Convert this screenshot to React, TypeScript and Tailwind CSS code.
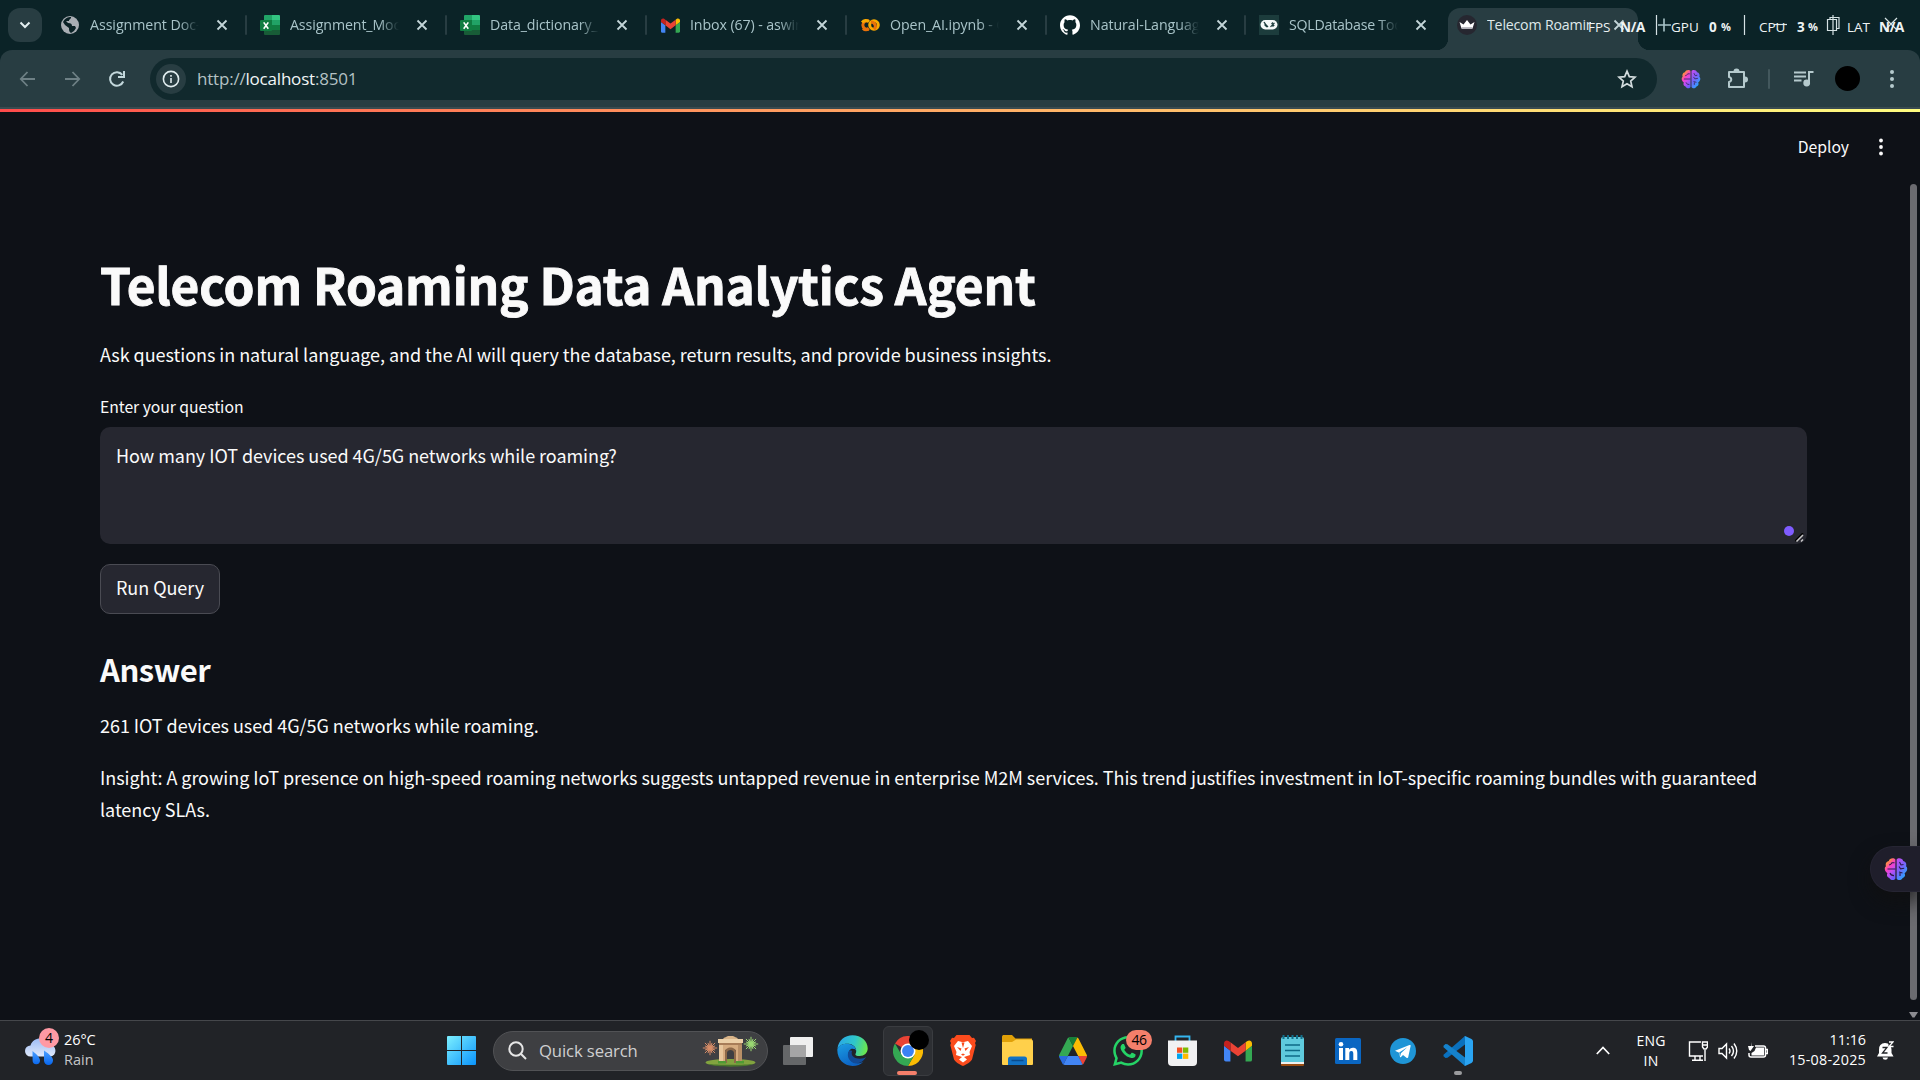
import React, { useId } from "react";
import type { ReactNode } from "react";
import { SiGithub, SiWhatsapp } from "react-icons/si";

const SYS = "font-['Open_Sans','Noto_Sans',sans-serif]";
const APP = "font-['Noto_Sans_CJK_SC',sans-serif]";

function Globe() {
  return (
    <svg width="20" height="20" viewBox="0 0 20 20">
      <circle cx="10" cy="10" r="9" fill="#a9aeb4" />
      <path d="M3 7c2-4 5-5 8-5 .5 2-2 2-2 4H6l2 2c3 0 4 1 4 3h3l1 2-2 3-3 2c-2-1-2-3-2-5L5 10z" fill="#0b2226" />
      <path d="M9 6l3-2 3 2-2 2z" fill="#a9aeb4" />
    </svg>
  );
}

function Excel() {
  return (
    <svg width="20" height="20" viewBox="0 0 20 20">
      <path d="M4 1a1 1 0 0 1 1-1h7v6H4z" fill="#21a366" />
      <path d="M12 0h7a1 1 0 0 1 1 1v4h-8z" fill="#33c481" />
      <path d="M4 5h8v5H4z" fill="#107c41" />
      <path d="M12 5h8v5h-8z" fill="#21a366" />
      <path d="M4 10h8v5H4z" fill="#185c37" />
      <path d="M12 10h8v5h-8z" fill="#107c41" />
      <path d="M4 15h16v4a1 1 0 0 1-1 1H5a1 1 0 0 1-1-1z" fill="#185c37" />
      <rect x="0" y="5" width="12" height="11" rx="1" fill="#107c41" />
      <path d="M3.700 7.400l4.600 6.400M8.300 7.400l-4.600 6.400" stroke="#fff" strokeWidth="1.600" />
    </svg>
  );
}

function Gmail({ size }: { size: number }) {
  return (
    <svg width={size} height={size} viewBox="0 0 24 24">
      <path d="M0 5.500v14A1.600 1.600 0 0 0 1.600 21H5.500V11.700L0 7.600z" fill="#4285f4" />
      <path d="M18.500 11.700V21h3.900a1.600 1.600 0 0 0 1.600-1.600V7.600z" fill="#34a853" />
      <path d="M18.500 4.600v7.100L24 7.600V5.500c0-2-2.300-3.200-3.900-2z" fill="#fbbc04" />
      <path d="M5.500 4.600L12 9.500l6.500-4.900v7.100L12 16.600l-6.500-4.900z" fill="#ea4335" />
      <path d="M0 5.500v2.100l5.500 4.100V4.600L3.900 3.500C2.300 2.300 0 3.500 0 5.500z" fill="#c5221f" />
    </svg>
  );
}

function Colab() {
  return (
    <svg width="20" height="20" viewBox="0 0 20 20" fill="none" strokeWidth="3">
      <path d="M8.700 6A4.300 4.300 0 1 0 8.700 14" stroke="#e8710a" />
      <circle cx="14" cy="10" r="4.300" stroke="#f9ab00" />
      <path d="M3 13.300A4.400 4.400 0 0 0 8.800 13.500" stroke="#e8710a" />
      <path d="M2.200 7.500A4.400 4.400 0 0 1 9 6.700" stroke="#f9ab00" />
      <path d="M11 6.900A4.300 4.300 0 0 1 14 14.300" stroke="#e8710a" />
    </svg>
  );
}

function Langchain() {
  return (
    <svg width="20" height="20" viewBox="0 0 20 20">
      <rect width="20" height="20" fill="#1c3c3c" />
      <rect x="1.500" y="5" width="17" height="9.500" rx="4.700" fill="#f4f8f8" />
      <path d="M5 7c1 2 2 3 4 5M5.500 9.500L8 12" stroke="#1c3c3c" strokeWidth="1.300" fill="none" />
      <path d="M11.500 11.800l4-4M12.500 9l1.500-1.500M13.500 11.500l1.800-1.500" stroke="#1c3c3c" strokeWidth="1.200" fill="none" />
    </svg>
  );
}

function Crown() {
  return (
    <svg width="20" height="20" viewBox="0 0 20 20">
      <circle cx="10" cy="10" r="10" fill="#262730" />
      <path d="M2.500 7l4 2.500L10 5l3.500 4.500 4-2.500-2 6.500h-11z" fill="#fff" />
      <path d="M4.300 12l11.400 0-.5 1.700H4.800z" fill="#bdbdc4" />
    </svg>
  );
}

function Brain({ size, line }: { size: number; line: string }) {
  const id = useId();
  return (
    <svg width={size} height={size} viewBox="0 0 24 24">
      <defs>
        <linearGradient id={id + "l"} x1="0.150" y1="0" x2="0.700" y2="1">
          <stop offset="0" stopColor="#ffb01f" />
          <stop offset="0.200" stopColor="#ff8a4a" />
          <stop offset="0.420" stopColor="#fb3fc0" />
          <stop offset="0.650" stopColor="#c84cf0" />
          <stop offset="1" stopColor="#6a5cff" />
        </linearGradient>
        <linearGradient id={id + "r"} x1="0" y1="0" x2="0.600" y2="1">
          <stop offset="0" stopColor="#d04af0" />
          <stop offset="0.500" stopColor="#7a62fa" />
          <stop offset="1" stopColor="#25a8ff" />
        </linearGradient>
      </defs>
      <path d="M11.400 2.500v19c-1.200 2.200-5 2-6-.6-2.300-.2-3-2.600-2-4.600C.8 14.700-.2 10.800 2 9.300 1 6.700 2.500 4.300 4.800 4 5.300 1 10 .2 11.400 2.500z" fill={`url(#${id}l)`} />
      <path d="M12.600 2.500v19c1.200 2.200 5 2 6-.6 2.300-.2 3-2.600 2-4.600 2.600-1.600 3.600-5.500 1.400-7 1-2.600-.5-5-2.800-5.300C18.700 1 14 .2 12.600 2.500z" fill={`url(#${id}r)`} />
      <path d="M3.500 12h7.900M5 8c1.500 0 2.200-.8 3-2.200h2.500M6 16c.5 1.800 1.500 2.500 4 2.600M15.500 5l1.500 3 2.500-.5M15 9.500l1.600 2.300 3.600-.5M15 15l3.500 1M16 19v-3" stroke={line} strokeWidth="1.100" fill="none" />
    </svg>
  );
}

function Close() {
  return (
    <svg width="12" height="12" viewBox="0 0 12 12" className="shrink-0">
      <path d="M1.500 1.500l9 9M10.500 1.500l-9 9" stroke="#c3d5d8" strokeWidth="1.800" />
    </svg>
  );
}

const tabs: { icon: ReactNode; title: string; track: string; w: string }[] = [
  { icon: <Globe />, title: "Assignment Doc-", track: "tracking-[-0.05px]", w: "w-[200px]" },
  { icon: <Excel />, title: "Assignment_Moc", track: "tracking-[-0.1px]", w: "w-[200px]" },
  { icon: <Excel />, title: "Data_dictionary_R", track: "tracking-[-0.1px]", w: "w-[200px]" },
  { icon: <Gmail size={19} />, title: "Inbox (67) - aswin", track: "tracking-[-0.1px]", w: "w-[200px]" },
  { icon: <Colab />, title: "Open_AI.ipynb - C", track: "tracking-[-0.1px]", w: "w-[200px]" },
  { icon: <SiGithub size={20} color="#fff" />, title: "Natural-Language", track: "tracking-[-0.05px]", w: "w-[199px]" },
  { icon: <Langchain />, title: "SQLDatabase Tool", track: "tracking-[-0.25px]", w: "w-[199px]" },
];

const fade = "[mask-image:linear-gradient(to_right,#000_82%,transparent)]";

function TabStrip() {
  return (
    <div className="relative flex h-[50px] items-center bg-[#0b2327] text-[14.200px] text-[#a9c4c9]">
      <div className="ml-2 mr-1 flex h-[34px] w-[34px] items-center justify-center rounded-xl bg-[#283d42]">
        <svg width="12" height="8" viewBox="0 0 12 8" fill="none">
          <path d="M1.500 1.500L6 6l4.500-4.500" stroke="#e3eef0" strokeWidth="2" />
        </svg>
      </div>
      {tabs.map((t, i) => (
        <div key={i} className={`relative flex h-full shrink-0 items-center pl-[14px] ${t.w}`}>
          <span className="flex w-5 justify-center">{t.icon}</span>
          <span className={`ml-[10px] w-[109px] overflow-hidden whitespace-nowrap leading-[20px] ${t.track} ${fade}`}>{t.title}</span>
          <span className="ml-[17px]"><Close /></span>
          {i < 6 && <span className="absolute -right-[1px] top-[15px] h-5 w-[2px] rounded bg-[#283d42]" />}
        </div>
      ))}
      <div className="relative ml-[4px] mt-2 flex h-[42px] w-[190px] items-center self-start rounded-t-xl bg-[#283d42] pl-[9px] text-[#dfe8ea]">
        <span className="absolute -left-3 bottom-0 h-3 w-3 bg-[radial-gradient(circle_at_0_0,transparent_12px,#283d42_12.500px)]" />
        <span className="absolute -right-3 bottom-0 h-3 w-3 bg-[radial-gradient(circle_at_100%_0,transparent_12px,#283d42_12.500px)]" />
        <span className="mb-2 flex items-center">
          <Crown />
          <span className="ml-[10px] w-[104px] overflow-hidden whitespace-nowrap leading-[20px] tracking-[-0.2px]">Telecom Roaming</span>
        </span>
        <span className="absolute left-[165px] top-[11px]"><Close /></span>
      </div>
      <svg className="absolute left-[1640px] top-0" width="280" height="50" viewBox="0 0 280 50" fill="none" stroke="#d6e2e4">
        <path d="M16.500 15v20M104.500 15v20" strokeWidth="1.200" />
        <path d="M18 25h13M24 18.500v13" stroke="#a9c4c9" strokeWidth="1.600" />
        <path d="M134 24.500h13" strokeWidth="1.200" />
        <path d="M187.500 19.500h9v11h-9zM190 19v-1.500h9v11h-2M193 15v20" strokeWidth="1.200" />
        <path d="M245 18l12 12M257 18l-12 12" strokeWidth="1.200" />
      </svg>
      <div className="absolute left-[1588px] top-[17px] flex items-center whitespace-nowrap font-['Open_Sans',sans-serif] text-[13.500px] leading-[20px] text-[#eef3f4]">
        <span className="w-[32px]">FPS</span>
        <b className="w-[51px] tracking-[-0.3px]">N/A</b>
        <span className="w-[38px]">GPU</span>
        <b className="w-[12px]">0</b>
        <b className="w-[38px] text-[11px]">%</b>
        <span className="w-[38px]">CPU</span>
        <b className="w-[11px]">3</b>
        <b className="w-[39px] text-[11px]">%</b>
        <span className="w-[32px]">LAT</span>
        <b className="tracking-[-0.3px]">N/A</b>
      </div>
    </div>
  );
}

function Toolbar() {
  return (
    <div className="bg-[#0b2327]">
      <div className="flex h-[59px] items-center rounded-t-[12px] border-b-2 border-[#3a4b50] bg-[#283d42]">
        <svg className="ml-[19px]" width="17" height="16" viewBox="0 0 17 16" fill="none" stroke="#6e8085" strokeWidth="1.800">
          <path d="M16 8H2M8.500 1L1.800 8l6.700 7" />
        </svg>
        <svg className="ml-[28px]" width="17" height="16" viewBox="0 0 17 16" fill="none" stroke="#6e8085" strokeWidth="1.800">
          <path d="M1 8h14M8.500 1l6.700 7-6.700 7" />
        </svg>
        <svg className="ml-[27px]" width="18" height="18" viewBox="0 0 18 18" fill="none" stroke="#c3d8dc" strokeWidth="2">
          <path d="M15.200 11.500A6.800 6.800 0 1 1 14.300 4.800" />
          <path d="M16 1v6h-6" />
        </svg>
        <div className="ml-[24px] flex h-[42px] w-[1507px] items-center rounded-full bg-[#11292d] pl-[6px]">
          <span className="flex h-[30px] w-[30px] items-center justify-center rounded-full bg-[#283d42]">
            <svg width="18" height="18" viewBox="0 0 18 18" fill="none" stroke="#e0ecee" strokeWidth="1.600">
              <circle cx="9" cy="9" r="7.600" />
              <path d="M9 8v5M9 5v1.700" />
            </svg>
          </span>
          <span className="ml-[11px] mt-[1px] text-[17px] leading-[22px] tracking-[-0.200px] text-[#b4c1c4]">
            http://<span className="text-[#f1f6f7]">localhost</span>:8501
          </span>
          <svg className="ml-auto mr-[20px]" width="20" height="20" viewBox="0 0 20 20" fill="none" stroke="#d3dcde" strokeWidth="1.700">
            <path d="M10 2.200l2.300 5.400 5.800.5-4.400 3.900 1.300 5.700-5-3-5 3 1.300-5.700-4.400-3.900 5.800-.5z" />
          </svg>
        </div>
        <span className="ml-[24px] flex w-5"><Brain size={20} line="#3b2b6a" /></span>
        <svg className="ml-[26px]" width="22" height="22" viewBox="0 0 22 22" fill="none" stroke="#b5cacd" strokeWidth="2">
          <path d="M2 4h15v15H2v-5c3-.5 3-4.500 0-5z" strokeLinejoin="round" />
          <path d="M7.500 3.500a2 2 0 0 1 4 0zM18 9.500a2 2 0 0 1 0 4z" fill="#b5cacd" />
        </svg>
        <span className="ml-[19px] h-5 w-[2px] rounded bg-[#43585d]" />
        <svg className="ml-[24px]" width="20" height="18" viewBox="0 0 20 18" fill="none" stroke="#b5cacd" strokeWidth="2">
          <path d="M0 2.500h12M0 6.500h12M0 10.500h7.500M15 13V2h4.500" />
          <circle cx="12.700" cy="13" r="2.400" fill="#b5cacd" />
        </svg>
        <span className="ml-[21px] h-[25px] w-[25px] rounded-full bg-black" />
        <svg className="ml-[30px]" width="4" height="20" viewBox="0 0 4 20" fill="#b5cacd">
          <circle cx="2" cy="3" r="2" /><circle cx="2" cy="10" r="2" /><circle cx="2" cy="17" r="2" />
        </svg>
      </div>
    </div>
  );
}

function Main() {
  return (
    <div className={`relative flex flex-1 flex-col bg-[#0e1117] text-[18px] tracking-[-0.047px] text-[#fafafa] ${APP}`}>
      <div className="h-[3px] bg-gradient-to-r from-[#ff4b4b] to-[#fffd80]" />
      <div className="flex h-[70px] items-center justify-end">
        <span className="text-[15.750px]">Deploy</span>
        <svg className="ml-[30px] mr-[37px]" width="4" height="18" viewBox="0 0 4 18" fill="#fafafa">
          <circle cx="2" cy="2.500" r="1.900" /><circle cx="2" cy="9" r="1.900" /><circle cx="2" cy="15.500" r="1.900" />
        </svg>
      </div>
      <div className="flex w-[1807px] flex-col items-start pl-[100px] pt-[69px]">
        <h1 className="text-[49.500px] font-bold leading-[66px] tracking-[-0.190px] [-webkit-text-stroke:0.900px_#fafafa]">Telecom Roaming Data Analytics Agent</h1>
        <p className="mt-[21px] leading-[32px]">Ask questions in natural language, and the AI will query the database, return results, and provide business insights.</p>
        <label className="mt-[24px] text-[15.750px] leading-[26px]">Enter your question</label>
        <div className="relative mt-[7px] h-[117px] w-full rounded-[10px] bg-[#262730] px-4 py-[12px] leading-[32px]">
          How many IOT devices used 4G/5G networks while roaming?
          <span className="absolute bottom-[8px] right-[13px] h-[10px] w-[10px] rounded-full bg-[#7f5cff]" />
          <svg className="absolute bottom-[1px] right-[2px]" width="10" height="10" viewBox="0 0 10 10" stroke="#c9c9c9" strokeWidth="1.500">
            <path d="M0 8l8-8" stroke="#000" />
            <path d="M1.500 8.500l6.500-6.500M6 8.500l2-2" />
          </svg>
        </div>
        <button className="mt-[20px] h-[50px] w-[120px] rounded-[10px] border border-[#4a4b53] bg-[#262730] pb-[3px]">Run Query</button>
        <h2 className="mt-[34px] text-[31px] font-semibold leading-[42px] tracking-[-0.450px]">Answer</h2>
        <p className="mt-[19px] leading-[32px]">261 IOT devices used 4G/5G networks while roaming.</p>
        <p className="mt-[20px] leading-[32px]">Insight: A growing IoT presence on high-speed roaming networks suggests untapped revenue in enterprise M2M services. This trend justifies investment in IoT-specific roaming bundles with guaranteed latency SLAs.</p>
      </div>
      <div className="absolute right-[3px] top-[75px] h-[816px] w-[7px] rounded-full bg-[#6b6b70]" />
      <svg className="absolute bottom-[2px] right-[2px]" width="9" height="6" viewBox="0 0 9 6"><path d="M0 0h9L5.500 5.500h-2z" fill="#8b8b90" /></svg>
      <div className="absolute right-0 top-[737px] flex h-[46px] w-[50px] items-center rounded-l-full border border-r-0 border-[#262533] bg-[#1f1e2b] pl-[13px] shadow-[0_10px_20px_rgba(16,16,16,0.8)]">
        <Brain size={24} line="#2b1a4c" />
      </div>
    </div>
  );
}

function Gate() {
  const rays = Array.from({ length: 16 }, (_, i) => (i * Math.PI) / 8);
  const burst = (cx: number, cy: number, color: string) => (
    <g stroke={color} strokeWidth="1">
      {rays.map((a, i) => (
        <path key={i} d={`M${cx} ${cy}L${cx + Math.cos(a) * (i % 2 ? 5.5 : 7.2)} ${cy + Math.sin(a) * (i % 2 ? 5.5 : 7.2)}`} />
      ))}
      <circle cx={cx} cy={cy} r="3.500" fill={color} fillOpacity="0.600" stroke="none" />
    </g>
  );
  return (
    <svg width="58" height="34" viewBox="0 0 58 34">
      {burst(8, 14, "#d98d68")}
      {burst(49, 10, "#9bd873")}
      <ellipse cx="28.500" cy="28.500" rx="25" ry="3.600" fill="#82a33f" />
      <path d="M5 30c10 3.500 38 3.500 47 0-8 1-38 1-47 0z" fill="#48752c" />
      <path d="M17 10h23v19h-6V17c0-3-11-3-11 0v12h-6z" fill="#d6ac80" />
      <path d="M17 10h4v19h-4z" fill="#e8c79d" />
      <path d="M36 10h4v19h-4z" fill="#b88f67" />
      <path d="M23 29V18c0-6 11-6 11 0v11h-2V19c0-4-7-4-7 0v10z" fill="#8d6949" />
      <path d="M16 5h25v4H16z" fill="#ecd0a8" />
      <path d="M17 9h23v2H17z" fill="#a87d58" />
      <path d="M21 5c1-2 4-2 5-3h5c1 1 4 1 5 3z" fill="#d9b489" />
      <path d="M16 27h8v2.500h-8zM34 27h8v2.500h-8z" fill="#4f9a34" />
    </svg>
  );
}

function Edge() {
  return (
    <svg width="31" height="31" viewBox="0 0 32 32">
      <defs>
        <linearGradient id="eg" x1="0" y1="0.300" x2="1" y2="0.500"><stop offset="0" stopColor="#2aa7e8" /><stop offset="0.550" stopColor="#2fc7c9" /><stop offset="1" stopColor="#6be84d" /></linearGradient>
        <linearGradient id="eb" x1="0" y1="0" x2="0.500" y2="1"><stop offset="0" stopColor="#1b9de2" /><stop offset="1" stopColor="#0c62c4" /></linearGradient>
      </defs>
      <path d="M.5 14C1.500 5.500 8 .3 16 .3c9 0 15.700 6 15.700 13.500 0 5-3.700 8-8.200 8-3.500 0-5-1.300-4.600-2.300C21 17 20 10 12 9 6 8.500 2 11 .5 14z" fill="url(#eg)" />
      <path d="M.4 14.500C2 10.500 7 8.600 12 9.200c6 .8 8 4.800 7.500 7.300-1-2.500-5-3.500-7 0-2 4 0 11 7 12.500 3 .5 6-.5 8-1.700C24.500 30.500 20.500 32 16 32 7 32-.3 24.500.4 14.500z" fill="url(#eb)" />
      <path d="M12 17c-2.500 5 1 11.500 7.500 12.300 4.500.3 8.500-3 10.500-6.500-2.500 1.700-9.500 2.800-13-.3-1.700-1.500-2.400-3.500-1.500-6-1.400-.7-2.700-.5-3.500.5z" fill="#124a96" />
      <path d="M19.500 16.500c.3 2-1.400 2.700-.6 4-2.500-1-3.500-3-2.700-5 1-1.500 3-.7 3.300 1z" fill="#202327" />
    </svg>
  );
}

function Chrome() {
  return (
    <svg width="30" height="30" viewBox="0 0 48 48">
      <path d="M24 24L3.200 12a24 24 0 0 1 41.600 0z" fill="#ea4335" />
      <path d="M24 12h20.800A24 24 0 0 1 24 48l10.400-18z" fill="#fbbc04" />
      <path d="M13.600 30L3.200 12A24 24 0 0 0 24 48l10.400-18z" fill="#34a853" />
      <circle cx="24" cy="24" r="12" fill="#fff" />
      <circle cx="24" cy="24" r="9.500" fill="#3b82f4" />
    </svg>
  );
}

function Folder() {
  return (
    <svg width="31" height="31" viewBox="0 0 31 31">
      <path d="M0 2C0 .5.8 0 2 0h8l3.500 3.500H30v5H0z" fill="#e0a008" />
      <path d="M0 7h10l4-2.500h15a2 2 0 0 1 2 2V29a1 1 0 0 1-1 1H1a1 1 0 0 1-1-1z" fill="#ffd04b" />
      <path d="M6 30v-6a2.500 2.500 0 0 1 2.500-2.500h14A2.500 2.500 0 0 1 25 24v6z" fill="#1372c4" />
      <path d="M9.500 25.500h12" stroke="#0a4c8d" strokeWidth="1.500" />
    </svg>
  );
}

function Drive() {
  return (
    <svg width="28" height="28" viewBox="0 0 87.300 78" preserveAspectRatio="none">
      <path d="M6.600 66.850l3.850 6.650c.8 1.400 1.950 2.500 3.300 3.300L27.500 53H0c0 1.550.4 3.100 1.200 4.500z" fill="#2a6ce0" />
      <path d="M43.650 25L29.900 1.200c-1.350.8-2.500 1.900-3.300 3.300L1.200 48.500A9 9 0 0 0 0 53h27.500z" fill="#34a853" />
      <path d="M73.550 76.800c1.350-.8 2.500-1.900 3.300-3.300L86.100 57.500c.8-1.400 1.200-2.950 1.200-4.500H59.800l5.850 11.500z" fill="#ea4335" />
      <path d="M43.650 25L57.400 1.200C56.050.4 54.500 0 52.900 0H34.400c-1.600 0-3.150.45-4.500 1.200z" fill="#188038" />
      <path d="M59.800 53H27.500L13.750 76.800c1.350.8 2.900 1.200 4.500 1.200h50.800c1.600 0 3.150-.45 4.500-1.200z" fill="#4285f4" />
      <path d="M73.400 26.500L60.700 4.500c-.8-1.400-1.950-2.500-3.300-3.300L43.650 25 59.800 53h27.450c0-1.550-.4-3.100-1.200-4.500z" fill="#fbbc04" />
    </svg>
  );
}

function Store() {
  return (
    <svg width="29" height="31" viewBox="0 0 29 31">
      <path d="M7.500 7V1.500h14V7" fill="none" stroke="#35b6f0" strokeWidth="1.800" />
      <path d="M0 5.500h29V27a4 4 0 0 1-4 4H4a4 4 0 0 1-4-4z" fill="#f1f1f2" />
      <path d="M9 12.500h5.300v5.300H9z" fill="#f25022" /><path d="M15 12.500h5.300v5.300H15z" fill="#7fba00" />
      <path d="M9 18.600h5.300v5.300H9z" fill="#00a4ef" /><path d="M15 18.600h5.300v5.300H15z" fill="#ffb900" />
    </svg>
  );
}

function Notepad() {
  return (
    <svg width="23" height="31" viewBox="0 0 23 31">
      <path d="M0 26h23v4a1 1 0 0 1-1 1H1a1 1 0 0 1-1-1z" fill="#9a4d12" />
      <path d="M0 24h23v5H0z" fill="#f0f0ee" />
      <path d="M0 4a2 2 0 0 1 2-2h19a2 2 0 0 1 2 2v23H0z" fill="#5fcadd" />
      <path d="M2.500 0v4M7 0v4M11.500 0v4M16 0v4M20.500 0v4" stroke="#12708c" strokeWidth="2" />
      <path d="M4 10h15M4 15.500h15M4 21h15" stroke="#0e6a86" strokeWidth="1.700" />
    </svg>
  );
}

function LinkedIn() {
  return (
    <svg width="26" height="26" viewBox="0 0 26 26">
      <rect width="26" height="26" rx="1.500" fill="#0a66c2" />
      <circle cx="6" cy="6.300" r="2.300" fill="#fff" />
      <path d="M4 10h4v12H4zM10.300 10h3.800v1.700c.8-1.300 2.200-2 3.800-2 3.500 0 4.400 2.200 4.400 5.300v7h-4v-6.300c0-1.500-.3-2.800-2-2.800s-2 1.300-2 2.800V22h-4z" fill="#fff" />
    </svg>
  );
}

function Telegram() {
  return (
    <svg width="26" height="26" viewBox="0 0 26 26">
      <circle cx="13" cy="13" r="13" fill="#1f95d6" />
      <path d="M5 12.800L19.500 7c.8-.3 1.300.1 1.100 1.100l-2.400 11.200c-.2.800-.8 1-1.400.6l-3.800-2.800-2 1.900c-.5.400-.9.300-1-.3l-.9-4z" fill="#fff" />
      <path d="M9.200 14.500l8-5.200-6.300 6-.7 3z" fill="#1f95d6" />
    </svg>
  );
}

function VSCode() {
  return (
    <svg width="30" height="30" viewBox="0 0 30 30">
      <path d="M22 0v8.500L4.500 21.800 2.500 22 .5 20.200v-1.500z" fill="#0a70bd" />
      <path d="M22 30v-8.500L4.500 8.200 2.500 8 .5 9.800v1.500z" fill="#1582cc" />
      <path d="M22 0l6.500 3A2.600 2.600 0 0 1 30 5.200v19.600a2.600 2.600 0 0 1-1.500 2.200L22 30c-.7 0 0-1 0-1.500v-27C22 1 21.300 0 22 0z" fill="#2aa4f2" />
    </svg>
  );
}

function Cell({ children }: { children: ReactNode }) {
  return <div className="relative flex h-[50px] w-[55px] shrink-0 items-center justify-center">{children}</div>;
}

function Taskbar() {
  return (
    <div className="flex h-[60px] items-center border-t border-[#45474b] bg-[#212327] text-[14.500px] text-white">
      <div className="flex w-[447px] items-center pl-[25px]">
        <div className="relative">
          <svg width="31" height="28" viewBox="0 0 31 28">
            <defs>
              <linearGradient id="cl" x1="0" y1="0" x2="0" y2="1"><stop offset="0" stopColor="#9dbcf5" /><stop offset="1" stopColor="#dfe8fa" /></linearGradient>
              <linearGradient id="dr" x1="0" y1="0" x2="0" y2="1"><stop offset="0" stopColor="#4da0ff" /><stop offset="1" stopColor="#0766ee" /></linearGradient>
            </defs>
            <path d="M5.500 19.500a5.500 5.500 0 0 1 0-11C8 0 20-1 23 7c9-.5 10 12 2 12.500z" fill="url(#cl)" />
            <path d="M7.500 14c5 4 7.500 7 7.500 9.500a3.700 3.700 0 0 1-7.400 0zM19 13.500c6 4 9 7 9 10a4.400 4.400 0 0 1-9 0z" fill="url(#dr)" />
          </svg>
          <span className="absolute -top-[9px] left-[14px] flex h-5 w-5 items-center justify-center rounded-full bg-[#ff99a4] text-[14px] text-black">4</span>
        </div>
        <div className="-mt-[1px] ml-[8px] leading-[20px]">
          <div className="tracking-[-0.1px]">26°C</div>
          <div className="text-[#c5c6c7]">Rain</div>
        </div>
      </div>
      <svg width="29" height="29" viewBox="0 0 29 29">
        <defs><linearGradient id="win" x1="0" y1="0" x2="1" y2="1"><stop offset="0" stopColor="#7df0ff" /><stop offset="1" stopColor="#0a93fb" /></linearGradient></defs>
        <path d="M0 1a1 1 0 0 1 1-1h13v14H0zM15 0h13a1 1 0 0 1 1 1v13H15zM0 15h14v14H1a1 1 0 0 1-1-1zM15 15h14v13a1 1 0 0 1-1 1H15z" fill="url(#win)" />
      </svg>
      <div className="ml-[17px] flex h-[40px] w-[275px] items-center rounded-full border border-[#515255] bg-[#3e3f42] pl-[14px]">
        <svg width="19" height="19" viewBox="0 0 19 19" fill="none" stroke="#e6e6e6" strokeWidth="2"><circle cx="8" cy="8" r="6.700" /><path d="M12.800 12.800l5.200 5.200" /></svg>
        <span className="ml-[12px] text-[16.700px] tracking-[-0.120px] text-[#cfcfd0]">Quick search</span>
        <span className="ml-auto mr-[7px]"><Gate /></span>
      </div>
      <div className="ml-[2px] flex">
        <Cell>
          <svg width="30" height="28" viewBox="0 0 30 28">
            <rect x="7" y="0" width="23" height="20" rx="1" fill="#efefef" /><rect x="0" y="8" width="23" height="20" rx="1" fill="#77787a" fillOpacity="0.800" /><rect x="7" y="8" width="16" height="12" fill="#a5a5a6" />
          </svg>
        </Cell>
        <Cell><Edge /></Cell>
        <Cell>
          <span className="absolute inset-x-[2.500px] inset-y-0 rounded-md border border-[#3a3c40] bg-[#2d2f33]" />
          <span className="relative"><Chrome /></span>
          <span className="absolute left-[29px] top-[4px] h-5 w-5 rounded-full bg-black" />
          <span className="absolute bottom-[1px] left-[17px] h-1 w-5 rounded-full bg-[#f47f6b]" />
        </Cell>
        <Cell>
          <svg width="26" height="31" viewBox="0 0 26 31">
            <path d="M6.500 0h13l2.500 3 2-.3L26 6l-1 2 .7 2L22 24.500c-1 2-6 5.500-9 6.500-3-1-8-4.500-9-6.500L.3 10 1 8 0 6l2-3.300L4 3z" fill="#fb4b1d" />
            <path d="M8 6l5 1.200L18 6l4 5-2.500 6 .5 3-6 2 3 2.500-4 3-4-3 3-2.500-6-2 .5-3L4 11z" fill="#fff" />
            <path d="M7 12l4.500 1.500L10.500 16zM19 12l-4.500 1.500 1 2.500zM11 19.500l2-1 2 1-2 1.200zM11.500 7.500L13 13l1.500-5.500z" fill="#fb4b1d" />
          </svg>
        </Cell>
        <Cell><Folder /></Cell>
        <Cell><Drive /></Cell>
        <Cell>
          <SiWhatsapp size={30} color="#25d366" />
          <span className="absolute left-[26px] top-[4px] flex h-[20px] w-[26px] items-center justify-center rounded-full bg-[#f47f6b] text-[14px] tracking-[-0.500px] text-black">46</span>
        </Cell>
        <Cell><Store /></Cell>
        <Cell><Gmail size={28} /></Cell>
        <Cell><Notepad /></Cell>
        <Cell><LinkedIn /></Cell>
        <Cell><Telegram /></Cell>
        <Cell>
          <VSCode />
          <span className="absolute bottom-[1px] left-[24px] h-1 w-2 rounded-full bg-[#9a9b9d]" />
        </Cell>
      </div>
      <svg className="ml-[111px]" width="14" height="9" viewBox="0 0 14 9" fill="none" stroke="#fff" strokeWidth="1.700"><path d="M.8 8L7 1.500 13.200 8" /></svg>
      <div className="ml-[17px] w-[48px] text-center text-[14px] leading-[20px] tracking-[0.200px]"><div>ENG</div><div>IN</div></div>
      <svg className="ml-[13px]" width="20" height="20" viewBox="0 0 20 20" fill="none" stroke="#fff" strokeWidth="1.400">
        <path d="M13 1H1.500v14H15M4 19.200h11M7 15v4M12 15v4M17 9v11M14.500 1h5v5l-1.500 2h-2l-1.500-2zM14.500 4h5" />
      </svg>
      <svg className="ml-[10px]" width="20" height="20" viewBox="0 0 20 20" fill="none" stroke="#fff" strokeWidth="1.400">
        <path d="M1 7.500h3L8.500 3v14L4 12.500H1zM11 7.500q2 2.500 0 5M13.500 5q4 5 0 10M16 2.500q5.500 7.500 0 15" />
      </svg>
      <svg className="ml-[10px]" width="20" height="18" viewBox="0 0 20 18" fill="none" stroke="#fff" strokeWidth="1.500">
        <path d="M7 4h8.500a2 2 0 0 1 2 2v7a2 2 0 0 1-2 2H3a2 2 0 0 1-2-2v-2M18 7.500h1.500v4H18" />
        <path d="M8 5.500h8v8H3.500v-2.500l3-2z" fill="#fff" stroke="none" />
        <path d="M3.500 0v4H0l1 4 1.500 1L6 4H4z" fill="#fff" stroke="none" />
      </svg>
      <div className="-mt-[1px] ml-auto mr-[11px] text-right text-[14.300px] leading-[20px]"><div>11:16</div><div className="tracking-[0.250px]">15-08-2025</div></div>
      <svg className="mr-[26px]" width="17" height="20" viewBox="0 0 17 20">
        <path d="M2 9a6 6 0 0 1 6-7c4 0 6.500 3 6.500 7v3l2 3.500H0L2 12zM5.500 16.500h5.500a2.800 2.800 0 0 1-5.500 0z" fill="#fff" />
        <path d="M5.500 6.500h4.500l-4.500 5.500h5" stroke="#212327" strokeWidth="1.300" fill="none" />
        <path d="M11.500 0h5v6h-5z" fill="#212327" />
        <path d="M12 1h4l-4 4.500h4.500" stroke="#fff" strokeWidth="1.300" fill="none" />
      </svg>
    </div>
  );
}

export default function App() {
  return (
    <div className={`flex h-[1080px] w-[1920px] flex-col overflow-hidden ${SYS}`}>
      <TabStrip />
      <Toolbar />
      <Main />
      <Taskbar />
    </div>
  );
}
